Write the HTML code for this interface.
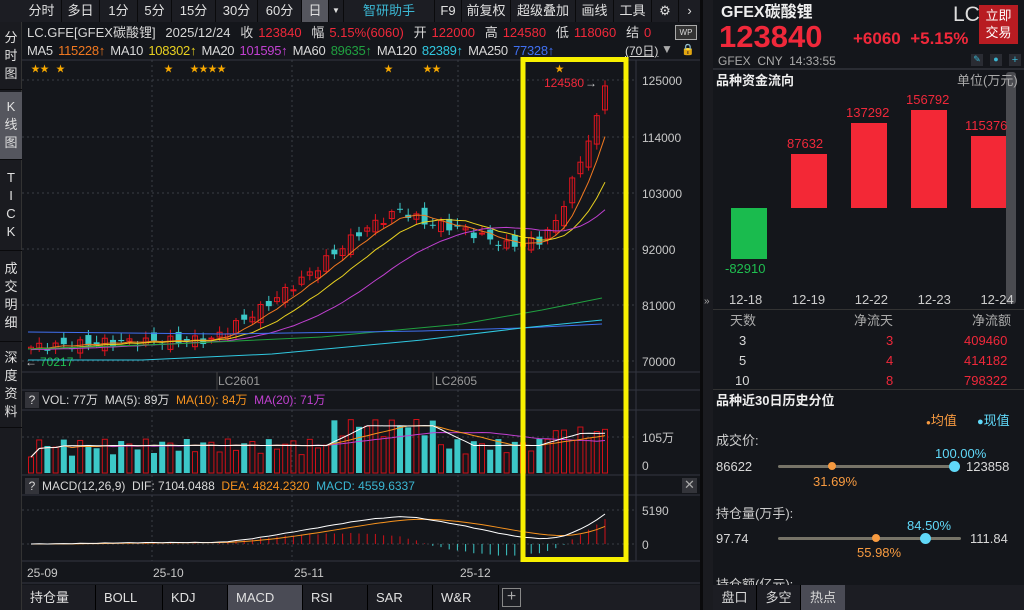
<!DOCTYPE html>
<html><head><meta charset="utf-8"><style>
*{margin:0;padding:0;box-sizing:border-box}
body{width:1024px;height:610px;background:#14161b;font-family:"Liberation Sans","Noto Sans CJK SC",sans-serif;color:#d8d8d8;position:relative;overflow:hidden;font-size:13px;line-height:1.2}
.a{position:absolute;white-space:nowrap}
.r{color:#f0283a}.g{color:#1fbf50}.o{color:#f7931e}.c{color:#60d8f8}
.tb{position:absolute;top:0;height:22px;line-height:22px;font-size:13px;color:#e0e0e0;text-align:center;border-right:1px solid #0a0a0c;overflow:hidden}
.sb{position:absolute;left:0;width:22px;text-align:center;font-size:13px;color:#e0e0e0;line-height:18px;border-bottom:1px solid #0a0a0c}
.bt{position:absolute;top:585px;height:25px;line-height:25px;font-size:13px;padding-left:8px;border-right:1px solid #000;color:#e0e0e0}
</style></head><body>
<div class="a" style="left:0;top:0;width:700px;height:22px;background:#1c1d23"></div>
<div class="tb" style="left:22px;width:40px">分时</div>
<div class="tb" style="left:62px;width:38px">多日</div>
<div class="tb" style="left:100px;width:38px">1分</div>
<div class="tb" style="left:138px;width:34px">5分</div>
<div class="tb" style="left:172px;width:44px">15分</div>
<div class="tb" style="left:216px;width:42px">30分</div>
<div class="tb" style="left:258px;width:44px">60分</div>
<div class="tb" style="left:302px;width:27px;background:#55565e">日</div>
<div class="tb" style="left:329px;width:15px;font-size:8px">▼</div>
<div class="tb" style="left:344px;width:91px;color:#3bb6d2">智研助手</div>
<div class="tb" style="left:435px;width:27px">F9</div>
<div class="tb" style="left:462px;width:49px">前复权</div>
<div class="tb" style="left:511px;width:65px">超级叠加</div>
<div class="tb" style="left:576px;width:38px">画线</div>
<div class="tb" style="left:614px;width:38px">工具</div>
<div class="tb" style="left:652px;width:27px">⚙</div>
<div class="tb" style="left:679px;width:21px;border:none">›</div>
<div class="a" style="left:0;top:22px;width:22px;height:588px;background:#1a1b20;border-right:1px solid #333"></div>
<div class="sb" style="top:25px;height:65px;padding-top:4px">分<br>时<br>图</div>
<div class="sb" style="top:92px;height:68px;padding-top:6px;background:#55565e">K<br>线<br>图</div>
<div class="sb" style="top:161px;height:90px;padding-top:8px">T<br>I<br>C<br>K</div>
<div class="sb" style="top:252px;height:90px;padding-top:8px">成<br>交<br>明<br>细</div>
<div class="sb" style="top:343px;height:85px;padding-top:6px">深<br>度<br>资<br>料</div>
<div class="a" style="left:27px;top:24px;font-size:13px;line-height:17px;word-spacing:1.3px">LC.GFE[GFEX碳酸锂] &nbsp;2025/12/24 &nbsp;收 <span class="r">123840</span> &nbsp;幅 <span class="r">5.15%(6060)</span> &nbsp;开 <span class="r">122000</span> &nbsp;高 <span class="r">124580</span> &nbsp;低 <span class="r">118060</span> &nbsp;结 <span class="r">0</span></div>
<div class="a" style="left:675px;top:25px;width:22px;height:15px;border:1px solid #aaa;font-size:8px;text-align:center;line-height:13px;background:#333">WP</div>
<div class="a" style="left:27px;top:43px;font-size:13px;line-height:16px;letter-spacing:-0.3px;word-spacing:2px">MA5 <span style="color:#f07820">115228↑</span> MA10 <span style="color:#e8d020">108302↑</span> MA20 <span style="color:#c040d0">101595↑</span> MA60 <span style="color:#20a040">89635↑</span> MA120 <span style="color:#30c8e0">82389↑</span> MA250 <span style="color:#4070f0">77328↑</span></div>
<div class="a" style="left:625px;top:44px;font-size:12px;text-decoration:underline">(70日)</div>
<div class="a" style="left:661px;top:42px;font-size:12px;color:#aaa">▼</div>
<div class="a" style="left:681px;top:44px;font-size:11px;color:#f0a020">🔒</div>
<svg class="a" style="left:22px;top:0" width="681" height="610" xmlns="http://www.w3.org/2000/svg">
<g stroke="#333640" stroke-width="1">
<line x1="0" y1="60" x2="681" y2="60"/><line x1="0" y1="372" x2="681" y2="372"/><line x1="0" y1="390" x2="681" y2="390"/>
<line x1="0" y1="410" x2="681" y2="410"/><line x1="0" y1="475" x2="681" y2="475"/><line x1="0" y1="495" x2="681" y2="495"/>
<line x1="0" y1="561" x2="681" y2="561"/><line x1="0" y1="583" x2="681" y2="583"/>
<line x1="614" y1="60" x2="614" y2="561"/>
</g>
<g stroke="#3a3d46" stroke-dasharray="2,3">
<line x1="0" y1="80" x2="614" y2="80"/><line x1="0" y1="137" x2="614" y2="137"/><line x1="0" y1="193" x2="614" y2="193"/><line x1="0" y1="249" x2="614" y2="249"/><line x1="0" y1="305" x2="614" y2="305"/><line x1="0" y1="361" x2="614" y2="361"/>
<line x1="130" y1="60" x2="130" y2="561"/><line x1="270" y1="60" x2="270" y2="561"/><line x1="436" y1="60" x2="436" y2="561"/>
<line x1="0" y1="437" x2="614" y2="437"/><line x1="0" y1="510" x2="614" y2="510"/><line x1="0" y1="544" x2="614" y2="544"/>
</g>
<line x1="195" y1="372" x2="195" y2="390" stroke="#444"/><line x1="411" y1="372" x2="411" y2="390" stroke="#444"/>
<g font-size="12" fill="#c8c8c8">
<text x="620" y="85">125000</text><text x="620" y="142">114000</text><text x="620" y="198">103000</text><text x="620" y="254">92000</text><text x="620" y="310">81000</text><text x="620" y="366">70000</text>
<text x="196" y="385" fill="#999">LC2601</text><text x="413" y="385" fill="#999">LC2605</text>
<text x="620" y="442">105万</text><text x="620" y="470">0</text><text x="620" y="515">5190</text><text x="620" y="549">0</text>
<text x="5" y="577">25-09</text><text x="131" y="577">25-10</text><text x="272" y="577">25-11</text><text x="438" y="577">25-12</text>
<text x="18" y="366" fill="#1fbf50">70217</text><text x="3" y="366" fill="#ccc">←</text>
<text x="522" y="87" fill="#f0283a">124580</text><text x="563" y="87" fill="#ccc">→</text>
</g>
<g font-size="9" fill="#f7a800"><text x="9" y="72">★★</text><text x="34" y="72">★</text><text x="142" y="72">★</text><text x="168" y="72">★★★★</text><text x="362" y="72">★</text><text x="401" y="72">★★</text><text x="533" y="72">★</text></g>
<g id="cd"></g>
<rect x="501" y="59.5" width="103" height="500" fill="none" stroke="#f8f000" stroke-width="5"/>
</svg>
<div class="a" style="left:25px;top:392px;width:14px;height:16px;background:#33343a;text-align:center;font-size:12px;line-height:16px">?</div>
<div class="a" style="left:42px;top:393px;font-size:12px">VOL: 77万 &nbsp;MA(5): 89万 &nbsp;<span class="o">MA(10): 84万</span> &nbsp;<span style="color:#c040d0">MA(20): 71万</span></div>
<div class="a" style="left:25px;top:478px;width:14px;height:16px;background:#33343a;text-align:center;font-size:12px;line-height:16px">?</div>
<div class="a" style="left:42px;top:479px;font-size:12px">MACD(12,26,9) &nbsp;DIF: 7104.0488 &nbsp;<span class="o">DEA: 4824.2320</span> &nbsp;<span style="color:#3bb6d2">MACD: 4559.6337</span></div>
<div class="a" style="left:682px;top:478px;width:15px;height:15px;background:#33343a;color:#aaa;font-size:13px;line-height:14px;text-align:center">✕</div>
<div class="a" style="left:22px;top:585px;width:678px;height:25px;background:#1c1d23"></div>
<div class="bt" style="left:22px;width:74px">持仓量</div>
<div class="bt" style="left:96px;width:67px">BOLL</div>
<div class="bt" style="left:163px;width:65px">KDJ</div>
<div class="bt" style="left:228px;width:75px;background:#4a4b55">MACD</div>
<div class="bt" style="left:303px;width:65px">RSI</div>
<div class="bt" style="left:368px;width:65px">SAR</div>
<div class="bt" style="left:433px;width:66px">W&amp;R</div>
<div class="a" style="left:502px;top:588px;width:19px;height:19px;border:1px solid #888;color:#aaa;font-size:16px;line-height:16px;text-align:center">+</div>
<div class="a" style="left:700px;top:0;width:3px;height:610px;background:#0a0a0c"></div>
<div class="a" style="left:703px;top:0;width:10px;height:610px;background:#1a1b20"></div>
<div class="a" style="left:704px;top:296px;font-size:10px;color:#aaa">»</div>
<div class="a" style="left:721px;top:4px;font-size:16px;line-height:18px;font-weight:bold;color:#eee">GFEX碳酸锂</div>
<div class="a r" style="left:719px;top:21px;font-size:31px;line-height:32px;font-weight:bold">123840</div>
<div class="a r" style="left:853px;top:29px;font-size:17px;line-height:20px;font-weight:bold">+6060 &nbsp;+5.15%</div>
<div class="a" style="left:953px;top:3px;font-size:21px;line-height:24px;color:#ddd">LC</div>
<div class="a" style="left:979px;top:5px;width:39px;height:39px;background:#b81c22;color:#fff;font-size:13px;line-height:17px;text-align:center;padding-top:2px">立即<br>交易</div>
<div class="a" style="left:718px;top:54px;font-size:12px;color:#aaa">GFEX &nbsp;CNY &nbsp;14:33:55</div>
<div class="a" style="left:971px;top:54px;width:12px;height:12px;background:#2a2c33;color:#3bb6d2;font-size:9px;text-align:center">✎</div>
<div class="a" style="left:990px;top:54px;width:12px;height:12px;background:#2a2c33;color:#3bb6d2;font-size:9px;text-align:center">●</div>
<div class="a" style="left:1009px;top:54px;width:12px;height:12px;background:#2a2c33;color:#3bb6d2;font-size:11px;line-height:12px;text-align:center">+</div>
<div class="a" style="left:713px;top:68px;width:311px;height:2px;background:#2a2c33"></div>
<div class="a" style="left:1006px;top:72px;width:10px;height:232px;background:#4a4b50;border-radius:3px"></div>
<div class="a" style="left:716px;top:73px;font-size:13px;font-weight:bold;color:#eee">品种资金流向</div>
<div class="a" style="left:957px;top:73px;font-size:13px;color:#aaa">单位(万元)</div>
<div class="a" style="left:731px;top:208px;width:36px;height:51px;background:#1abb4e"></div>
<div class="a" style="left:791px;top:154px;width:36px;height:54px;background:#f32836"></div>
<div class="a" style="left:851px;top:123px;width:36px;height:85px;background:#f32836"></div>
<div class="a" style="left:911px;top:110px;width:36px;height:98px;background:#f32836"></div>
<div class="a" style="left:971px;top:136px;width:35px;height:72px;background:#f32836"></div>
<div class="a g" style="left:725px;top:261px;font-size:13px">-82910</div>
<div class="a r" style="left:787px;top:136px;font-size:13px">87632</div>
<div class="a r" style="left:846px;top:105px;font-size:13px">137292</div>
<div class="a r" style="left:906px;top:92px;font-size:13px">156792</div>
<div class="a r" style="left:965px;top:118px;font-size:13px">115376</div>
<div class="a" style="left:729px;top:292px;font-size:13px;word-spacing:26px;color:#ccc">12-18 12-19 12-22 12-23 12-24</div>
<div class="a" style="left:713px;top:309px;width:311px;height:1px;background:#333"></div>
<div class="a" style="left:730px;top:313px;color:#aaa">天数</div><div class="a" style="left:854px;top:313px;color:#aaa">净流天</div><div class="a" style="left:972px;top:313px;color:#aaa">净流额</div>
<div class="a" style="left:739px;top:333px">3</div><div class="a r" style="left:886px;top:333px">3</div><div class="a r" style="left:964px;top:333px">409460</div>
<div class="a" style="left:739px;top:353px">5</div><div class="a r" style="left:886px;top:353px">4</div><div class="a r" style="left:964px;top:353px">414182</div>
<div class="a" style="left:735px;top:373px">10</div><div class="a r" style="left:886px;top:373px">8</div><div class="a r" style="left:964px;top:373px">798322</div>
<div class="a" style="left:713px;top:389px;width:311px;height:1px;background:#333"></div>
<div class="a" style="left:716px;top:393px;font-weight:bold;color:#eee">品种近30日历史分位</div>
<div class="a" style="left:926px;top:413px;color:#f79a40"><span style="font-size:8px">●</span>均值</div>
<div class="a c" style="left:977px;top:413px"><span style="font-size:11px">●</span>现值</div>
<div class="a" style="left:716px;top:433px;color:#ccc">成交价:</div>
<div class="a" style="left:716px;top:459px">86622</div><div class="a" style="left:966px;top:459px">123858</div>
<div class="a" style="left:778px;top:465px;width:178px;height:3px;background:#777468;border-radius:2px"></div>
<div class="a" style="left:828px;top:462px;width:8px;height:8px;border-radius:50%;background:#f79a40"></div>
<div class="a" style="left:949px;top:461px;width:11px;height:11px;border-radius:50%;background:#60d8f8"></div>
<div class="a c" style="left:935px;top:446px">100.00%</div>
<div class="a" style="left:813px;top:474px;color:#f79a40">31.69%</div>
<div class="a" style="left:716px;top:506px;color:#ccc">持仓量(万手):</div>
<div class="a" style="left:716px;top:531px">97.74</div><div class="a" style="left:970px;top:531px">111.84</div>
<div class="a" style="left:778px;top:537px;width:183px;height:3px;background:#777468;border-radius:2px"></div>
<div class="a" style="left:872px;top:534px;width:8px;height:8px;border-radius:50%;background:#f79a40"></div>
<div class="a" style="left:920px;top:533px;width:11px;height:11px;border-radius:50%;background:#60d8f8"></div>
<div class="a c" style="left:907px;top:518px">84.50%</div>
<div class="a" style="left:857px;top:545px;color:#f79a40">55.98%</div>
<div class="a" style="left:716px;top:577px;color:#ccc">持仓额(亿元):</div>
<div class="a" style="left:713px;top:585px;width:311px;height:25px;background:#1c1d23;display:flex;line-height:25px;font-size:13px">
<div style="width:44px;text-align:center;border-right:1px solid #000">盘口</div><div style="width:44px;text-align:center;border-right:1px solid #000">多空</div><div style="width:44px;text-align:center;background:#4a4b55">热点</div></div>
<script>
(function(){
var K=[[0,72500],[10,73500],[22,74000],[28,80000],[34,87000],[40,95000],[45,99500],[48,97000],[52,96000],[58,92500],[62,93500],[64,97000],[66,105000],[68,113000],[69,118000],[70,123840]];
var C=[];for(var i=0;i<=70;i++){for(var k=0;k<K.length-1;k++){if(i>=K[k][0]&&i<=K[k+1][0]){var t=(i-K[k][0])/(K[k+1][0]-K[k][0]);C.push(K[k][1]+t*(K[k+1][1]-K[k][1])+Math.sin(i*2.3)*900*(i<68?1:0));break;}}}
var Y=function(p){return 80+(125000-p)*0.00509};var X=function(i){return 6+i*8.2};
var s='';var H=[];
for(var i=0;i<=70;i++){var c=C[i],o=i?C[i-1]+Math.cos(i*1.7)*1200:c-300;var up=c>=o;var hi=Math.max(c,o)+400+Math.abs(Math.sin(i))*900,lo=Math.min(c,o)-400-Math.abs(Math.cos(i))*700;
var x=X(i),col=up?'#e0141e':'#3cc8c8';s+='<line x1="'+(x+3)+'" x2="'+(x+3)+'" y1="'+Y(hi)+'" y2="'+Y(lo)+'" stroke="'+col+'"/>';
var yt=Y(Math.max(c,o)),h=Math.max(1,Y(Math.min(c,o))-yt);
s+=up?'<rect x="'+(x+0.5)+'" y="'+yt+'" width="5" height="'+h+'" fill="none" stroke="'+col+'"/>':'<rect x="'+x+'" y="'+yt+'" width="6" height="'+h+'" fill="'+col+'"/>';
var vh=16+Math.abs(Math.sin(i*1.9))*18+(i>36&&i<50?20:0)+(i>62?12:0);H.push(vh);
s+=up?'<rect x="'+(x+0.5)+'" y="'+(473-vh)+'" width="5" height="'+vh+'" fill="none" stroke="#d01018"/>':'<rect x="'+x+'" y="'+(473-vh)+'" width="6" height="'+vh+'" fill="#3cc8c8"/>';}
var pre=[];for(var j=0;j<60;j++)pre.push(72000);var A=pre.concat(C);
function ma(n,col){var p='';for(var i=0;i<=70;i++){var sm=0;for(var j=0;j<n;j++)sm+=A[60+i-j];p+=(X(i)+3)+','+Y(sm/n)+' ';}return '<polyline points="'+p+'" fill="none" stroke="'+col+'" stroke-width="1"/>';}
s+=ma(5,'#f07820')+ma(10,'#e8d020')+ma(20,'#c040d0');
s+='<polyline points="6,349 150,344 300,337 440,324 520,310 580,298" fill="none" stroke="#20a040"/>';
s+='<polyline points="6,332 200,334 400,331 500,328 580,324" fill="none" stroke="#4070f0"/>';
s+='<polyline points="6,360 120,360 250,354 400,340 500,328 580,320" fill="none" stroke="#30c8e0"/>';
function vma(n,col){var p='';for(var i=0;i<=70;i++){var sm=0,c2=0;for(var j=0;j<n&&i-j>=0;j++){sm+=H[i-j];c2++;}p+=(X(i)+3)+','+(473-sm/c2)+' ';}return '<polyline points="'+p+'" fill="none" stroke="'+col+'"/>';}
s+=vma(20,'#c040d0')+vma(10,'#f7931e')+vma(5,'#fff');
var e12=72500,e26=72500,dea=0,pd='',pe='';
for(var i=0;i<=70;i++){e12=e12+(C[i]-e12)*2/13;e26=e26+(C[i]-e26)*2/27;var dif=e12-e26;dea=dea+(dif-dea)*0.2;var m=2*(dif-dea);
var sc=34/5190*0.72;var x=X(i)+3;pd+=x+','+(544-dif*sc)+' ';pe+=x+','+(544-dea*sc)+' ';
s+='<line x1="'+x+'" x2="'+x+'" y1="544" y2="'+(544-m*sc)+'" stroke="'+(m>=0?'#d01018':'#3cc8c8')+'"/>';}
s+='<polyline points="'+pe+'" fill="none" stroke="#f7931e"/><polyline points="'+pd+'" fill="none" stroke="#fff"/>';
document.getElementById('cd').innerHTML=s;})();
</script>
</body></html>
